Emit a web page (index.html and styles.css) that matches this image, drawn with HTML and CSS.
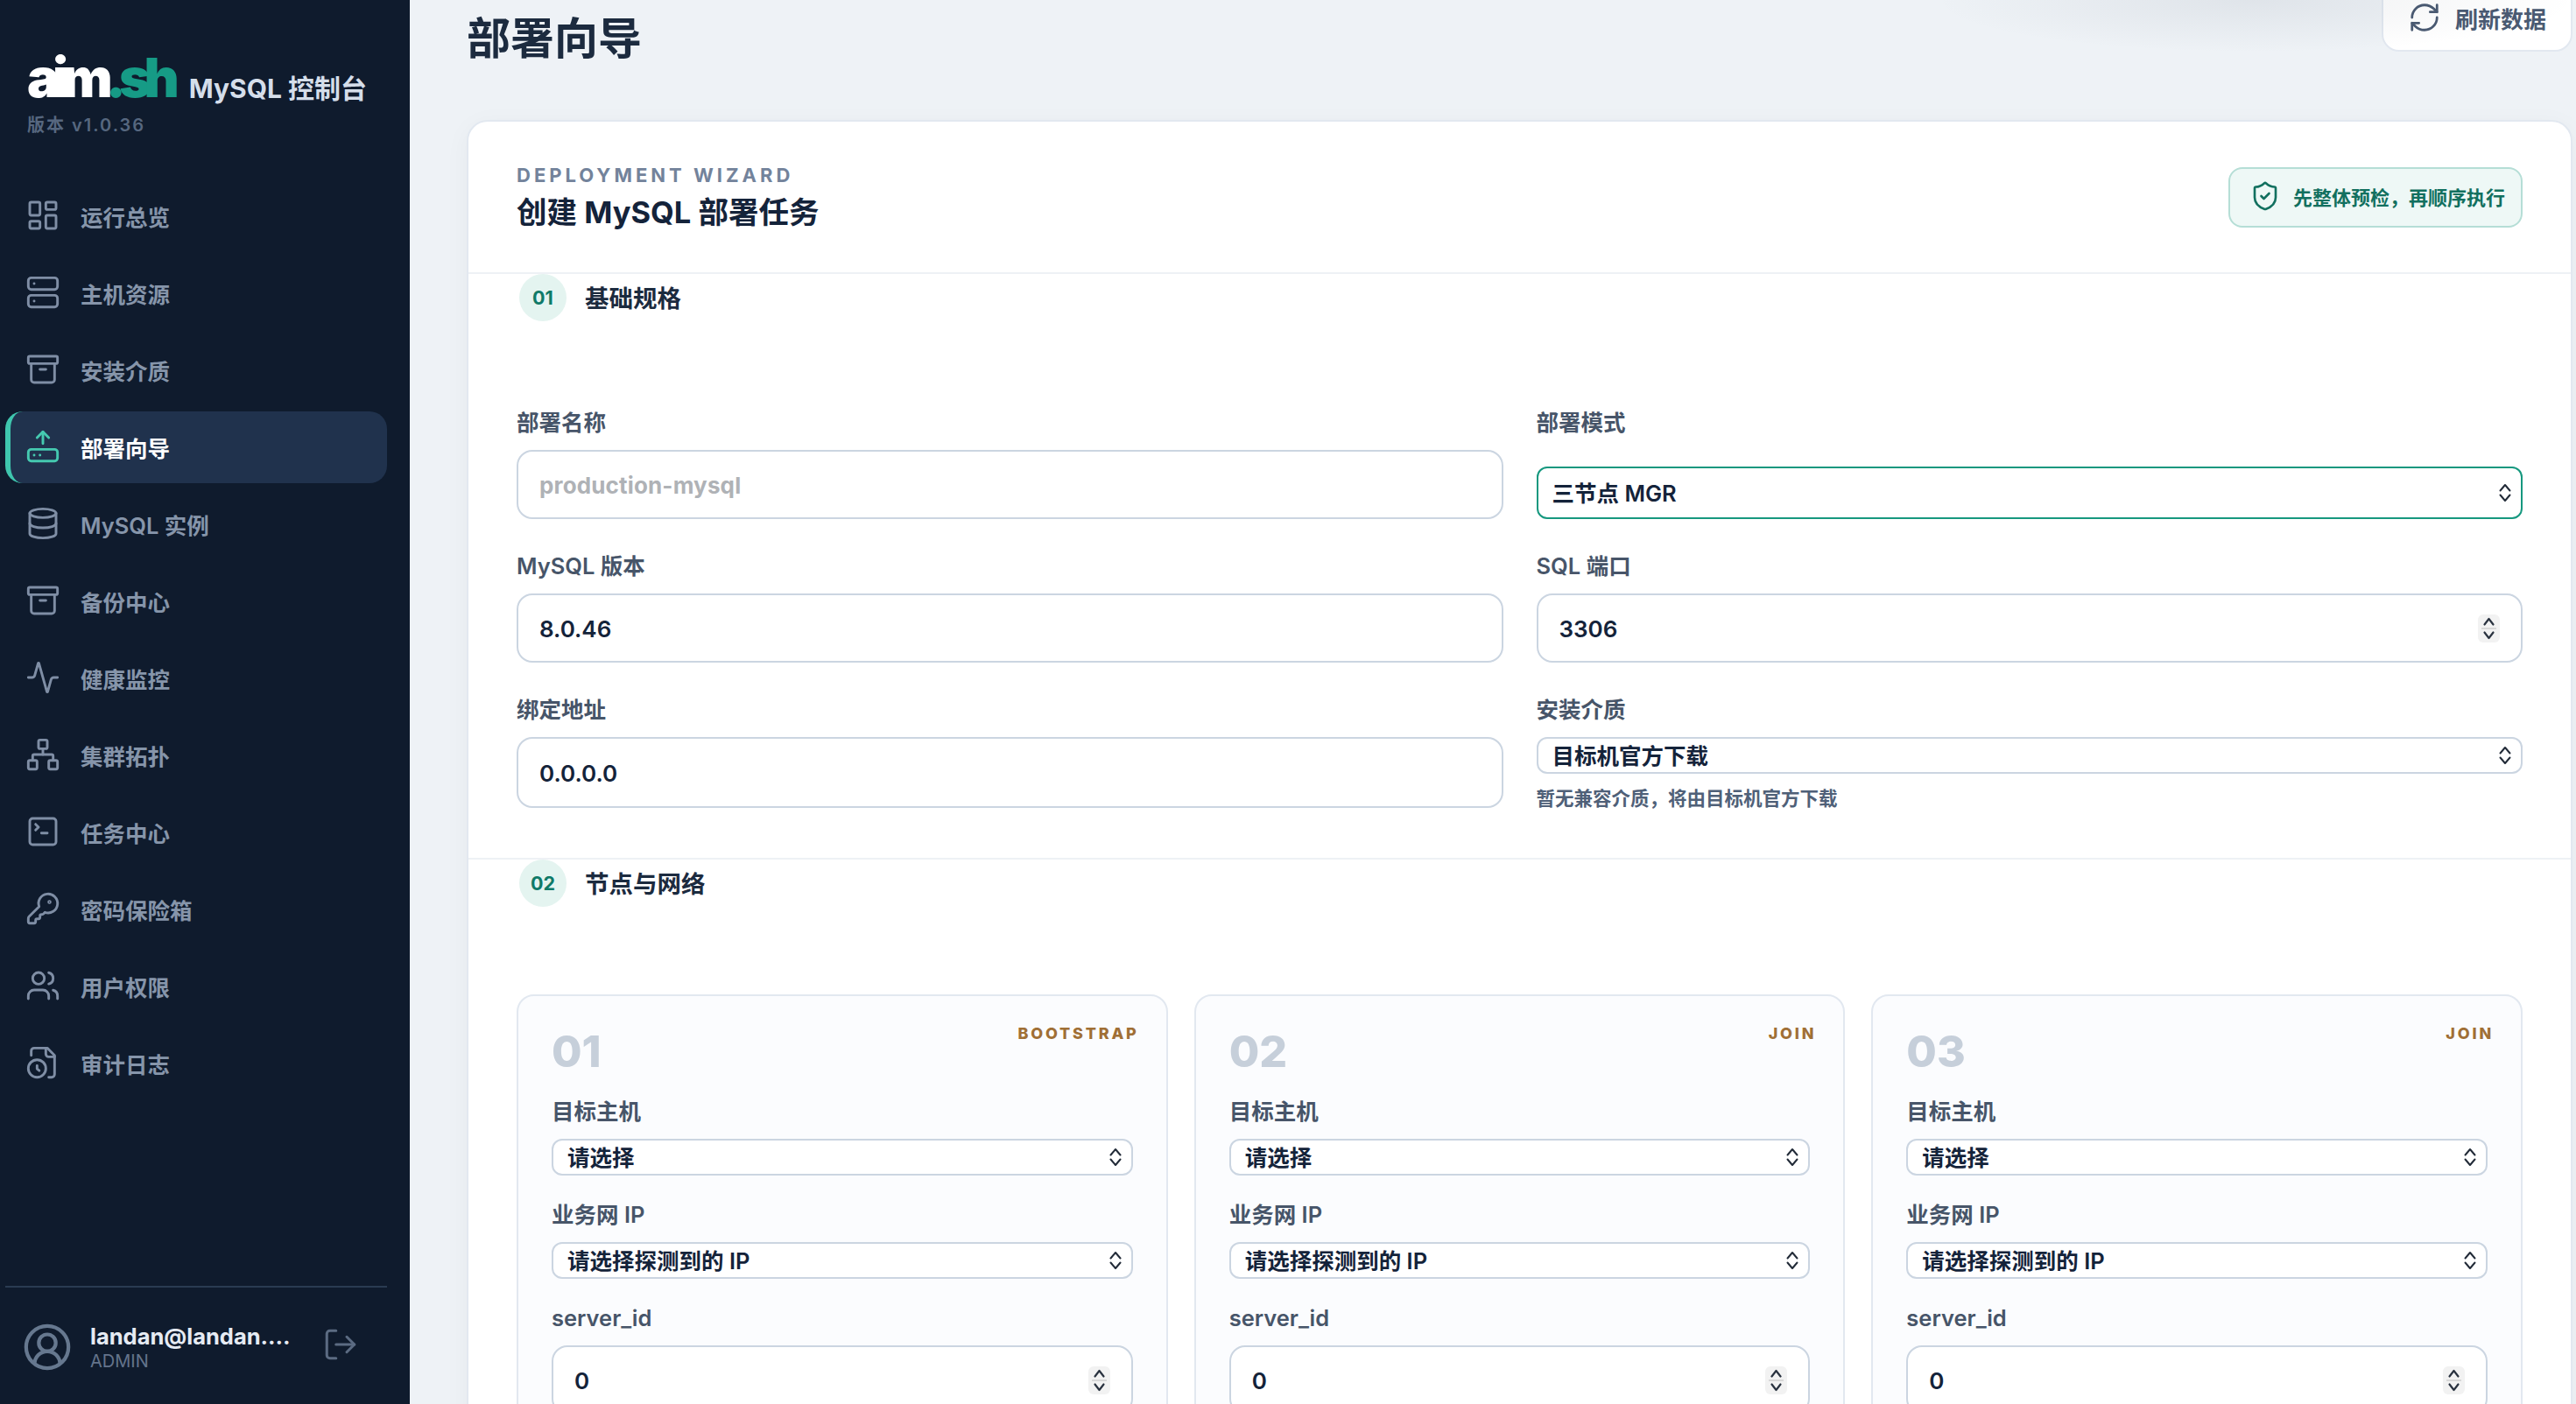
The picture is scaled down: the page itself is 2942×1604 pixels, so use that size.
FILE: index.html
```html
<!DOCTYPE html>
<html lang="zh-CN">
<head>
<meta charset="UTF-8">
<meta name="viewport" content="width=device-width, initial-scale=1.0">
<title>MySQL 控制台 - 部署向导</title>
<link rel="stylesheet" href="styles.css">
</head>

<body>
<svg class="defs" aria-hidden="true">
    <symbol id="spin" viewBox="0 0 25 32">
        <path d="M7.500 11.500 12.500 5l5 6.500M7.500 20.500l5 6.500 5-6.500" fill="none" stroke="#2a3340" stroke-width="2.200" stroke-linecap="round" stroke-linejoin="round"/>
        <path d="M4 16h17" stroke="#d8d8d8" stroke-width="2"/>
    </symbol>
</svg>

<div class="app">
    <aside class="sidebar">
        <div class="brand">
            <div class="brand-line">
                <span class="logo">aim<span class="logo-accent">.sh</span></span>
                <span class="brand-name">MySQL 控制台</span>
            </div>
            <div class="version">版本 v1.0.36</div>
        </div>

        <nav class="nav">
            <a class="nav-item">
                <svg class="icon" viewBox="0 0 24 24"><rect x="3" y="3" width="7" height="9" rx="1"/><rect x="14" y="3" width="7" height="5" rx="1"/><rect x="14" y="12" width="7" height="9" rx="1"/><rect x="3" y="16" width="7" height="5" rx="1"/></svg>
                <span>运行总览</span>
            </a>
            <a class="nav-item">
                <svg class="icon" viewBox="0 0 24 24"><rect x="2" y="2" width="20" height="8" rx="2"/><rect x="2" y="14" width="20" height="8" rx="2"/><path d="M6 6h.01M6 18h.01"/></svg>
                <span>主机资源</span>
            </a>
            <a class="nav-item">
                <svg class="icon" viewBox="0 0 24 24"><rect x="2" y="3" width="20" height="5" rx="1"/><path d="M4 8v11a2 2 0 0 0 2 2h12a2 2 0 0 0 2-2V8"/><path d="M10 12h4"/></svg>
                <span>安装介质</span>
            </a>
            <a class="nav-item active">
                <svg class="icon" viewBox="0 0 24 24"><path d="m16 6-4-4-4 4"/><path d="M12 2v8"/><rect x="2" y="14" width="20" height="8" rx="2"/><path d="M6 18h.01M10 18h.01"/></svg>
                <span>部署向导</span>
            </a>
            <a class="nav-item">
                <svg class="icon" viewBox="0 0 24 24"><ellipse cx="12" cy="5" rx="9" ry="3"/><path d="M3 5v14a9 3 0 0 0 18 0V5"/><path d="M3 12a9 3 0 0 0 18 0"/></svg>
                <span>MySQL 实例</span>
            </a>
            <a class="nav-item">
                <svg class="icon" viewBox="0 0 24 24"><rect x="2" y="3" width="20" height="5" rx="1"/><path d="M4 8v11a2 2 0 0 0 2 2h12a2 2 0 0 0 2-2V8"/><path d="M10 12h4"/></svg>
                <span>备份中心</span>
            </a>
            <a class="nav-item">
                <svg class="icon" viewBox="0 0 24 24"><path d="M22 12h-2.480a2 2 0 0 0-1.930 1.460l-2.350 8.360a.25.25 0 0 1-.48 0L9.240 2.180a.25.25 0 0 0-.48 0l-2.350 8.360A2 2 0 0 1 4.490 12H2"/></svg>
                <span>健康监控</span>
            </a>
            <a class="nav-item">
                <svg class="icon" viewBox="0 0 24 24"><rect x="16" y="16" width="6" height="6" rx="1"/><rect x="2" y="16" width="6" height="6" rx="1"/><rect x="9" y="2" width="6" height="6" rx="1"/><path d="M5 16v-3a1 1 0 0 1 1-1h12a1 1 0 0 1 1 1v3"/><path d="M12 12V8"/></svg>
                <span>集群拓扑</span>
            </a>
            <a class="nav-item">
                <svg class="icon" viewBox="0 0 24 24"><path d="m7 11 2-2-2-2"/><path d="M11 13h4"/><rect x="3" y="3" width="18" height="18" rx="2"/></svg>
                <span>任务中心</span>
            </a>
            <a class="nav-item">
                <svg class="icon" viewBox="0 0 24 24"><path d="M2.586 17.414A2 2 0 0 0 2 18.828V21a1 1 0 0 0 1 1h3a1 1 0 0 0 1-1v-1a1 1 0 0 1 1-1h1a1 1 0 0 0 1-1v-1a1 1 0 0 1 1-1h.172a2 2 0 0 0 1.414-.586l.814-.814a6.500 6.500 0 1 0-4-4z"/><circle cx="16.500" cy="7.500" r=".5"/></svg>
                <span>密码保险箱</span>
            </a>
            <a class="nav-item">
                <svg class="icon" viewBox="0 0 24 24"><path d="M16 21v-2a4 4 0 0 0-4-4H6a4 4 0 0 0-4 4v2"/><path d="M16 3.128a4 4 0 0 1 0 7.744"/><path d="M22 21v-2a4 4 0 0 0-3-3.870"/><circle cx="9" cy="7" r="4"/></svg>
                <span>用户权限</span>
            </a>
            <a class="nav-item">
                <svg class="icon" viewBox="0 0 24 24"><path d="M16 22h2a2 2 0 0 0 2-2V7l-5-5H6a2 2 0 0 0-2 2v3"/><path d="M14 2v4a2 2 0 0 0 2 2h4"/><circle cx="8" cy="16" r="6"/><path d="M9.500 17.500 8 16.250V14"/></svg>
                <span>审计日志</span>
            </a>
        </nav>

        <div class="user">
            <svg class="avatar" viewBox="0 0 24 24"><path d="M18 20a6 6 0 0 0-12 0"/><circle cx="12" cy="10" r="4"/><circle cx="12" cy="12" r="10"/></svg>
            <div class="user-info">
                <div class="user-name">landan@landan.…</div>
                <div class="user-role">ADMIN</div>
            </div>
            <svg class="logout" viewBox="0 0 24 24"><path d="M9 21H5a2 2 0 0 1-2-2V5a2 2 0 0 1 2-2h4"/><path d="m16 17 5-5-5-5"/><path d="M21 12H9"/></svg>
        </div>
    </aside>

    <main class="main">
        <div class="page-head">
            <h1>部署向导</h1>
            <button class="refresh">
                <svg class="refresh-icon" viewBox="0 0 24 24"><path d="M3 12a9 9 0 0 1 9-9 9.750 9.750 0 0 1 6.740 2.740L21 8"/><path d="M21 3v5h-5"/><path d="M21 12a9 9 0 0 1-9 9 9.750 9.750 0 0 1-6.740-2.740L3 16"/><path d="M8 16H3v5"/></svg>
                刷新数据
            </button>
        </div>

        <section class="card">
            <header class="card-head">
                <div>
                    <div class="eyebrow">DEPLOYMENT WIZARD</div>
                    <h2>创建 MySQL 部署任务</h2>
                </div>
                <div class="notice">
                    <svg class="notice-icon" viewBox="0 0 24 24"><path d="M20 13c0 5-3.500 7.500-7.660 8.950a1 1 0 0 1-.67-.01C7.500 20.500 4 18 4 13V6a1 1 0 0 1 1-1c2 0 4.500-1.200 6.240-2.720a1.170 1.170 0 0 1 1.520 0C14.510 3.810 17 5 19 5a1 1 0 0 1 1 1z"/><path d="m9 12 2 2 4-4"/></svg>
                    先整体预检，再顺序执行
                </div>
            </header>

            <div class="section">
                <div class="section-title">
                    <span class="step">01</span>
                    <h3>基础规格</h3>
                </div>
                <div class="form-grid">
                    <div class="field">
                        <label>部署名称</label>
                        <input class="text-input" type="text" placeholder="production-mysql">
                    </div>
                    <div class="field">
                        <label>部署模式</label>
                        <select class="select focused field-end">
                            <option>三节点 MGR</option>
                        </select>
                    </div>
                    <div class="field">
                        <label>MySQL 版本</label>
                        <input class="text-input" type="text" value="8.0.46">
                    </div>
                    <div class="field">
                        <label>SQL 端口</label>
                        <div class="number">
                            <input class="text-input" type="text" value="3306">
                            <svg class="spinner"><use href="#spin"/></svg>
                        </div>
                    </div>
                    <div class="field">
                        <label>绑定地址</label>
                        <input class="text-input grow" type="text" value="0.0.0.0">
                    </div>
                    <div class="field">
                        <label>安装介质</label>
                        <select class="select">
                            <option>目标机官方下载</option>
                        </select>
                        <p class="help">暂无兼容介质，将由目标机官方下载</p>
                    </div>
                </div>
            </div>

            <div class="section">
                <div class="section-title">
                    <span class="step">02</span>
                    <h3>节点与网络</h3>
                </div>
                <div class="node-grid">
                    <div class="node">
                        <div class="node-head">
                            <span class="node-no">01</span>
                            <span class="node-role">BOOTSTRAP</span>
                        </div>
                        <div class="node-field">
                            <label>目标主机</label>
                            <select class="select"><option>请选择</option></select>
                        </div>
                        <div class="node-field">
                            <label>业务网 IP</label>
                            <select class="select"><option>请选择探测到的 IP</option></select>
                        </div>
                        <div class="node-field">
                            <label>server_id</label>
                            <div class="number">
                                <input class="text-input" type="text" value="0">
                                <svg class="spinner"><use href="#spin"/></svg>
                            </div>
                        </div>
                    </div>
                    <div class="node">
                        <div class="node-head">
                            <span class="node-no">02</span>
                            <span class="node-role">JOIN</span>
                        </div>
                        <div class="node-field">
                            <label>目标主机</label>
                            <select class="select"><option>请选择</option></select>
                        </div>
                        <div class="node-field">
                            <label>业务网 IP</label>
                            <select class="select"><option>请选择探测到的 IP</option></select>
                        </div>
                        <div class="node-field">
                            <label>server_id</label>
                            <div class="number">
                                <input class="text-input" type="text" value="0">
                                <svg class="spinner"><use href="#spin"/></svg>
                            </div>
                        </div>
                    </div>
                    <div class="node">
                        <div class="node-head">
                            <span class="node-no">03</span>
                            <span class="node-role">JOIN</span>
                        </div>
                        <div class="node-field">
                            <label>目标主机</label>
                            <select class="select"><option>请选择</option></select>
                        </div>
                        <div class="node-field">
                            <label>业务网 IP</label>
                            <select class="select"><option>请选择探测到的 IP</option></select>
                        </div>
                        <div class="node-field">
                            <label>server_id</label>
                            <div class="number">
                                <input class="text-input" type="text" value="0">
                                <svg class="spinner"><use href="#spin"/></svg>
                            </div>
                        </div>
                    </div>
                </div>
            </div>
        </section>
    </main>
</div>
</body>
</html>
```

FILE: styles.css
```css
* {
    box-sizing: border-box;
}
html, body {
    height: 100%;
    margin: 0;
    overflow: hidden;
}
body {
    font-family: Inter, "Noto Sans CJK SC", sans-serif;
    background-color: #eef2f6;
    color: #14233a;
}
.defs {
    display: none;
}
.app {
    display: flex;
    height: 100vh;
}

/* sidebar */
.sidebar {
    width: 468px;
    flex-shrink: 0;
    display: flex;
    flex-direction: column;
    padding: 0 26px 0 6px;
    background-color: #0f1b2d;
}
.brand {
    height: 206px;
    padding: 58px 0 0 25px;
}
.brand-line {
    display: flex;
    align-items: flex-end;
    gap: 19px;
}
.logo {
    font-size: 62px;
    line-height: 62px;
    font-weight: 900;
    letter-spacing: -8px;
    color: #fff;
}
.logo-accent {
    color: #169b86;
}
.brand-name {
    margin-bottom: -1px;
    font-size: 30px;
    line-height: 40px;
    font-weight: 700;
    color: #d5deea;
    white-space: nowrap;
}
.version {
    margin-top: 11px;
    font-size: 20px;
    line-height: 24px;
    font-weight: 600;
    letter-spacing: 2px;
    color: #56677f;
}
.nav {
    display: flex;
    flex-direction: column;
    gap: 6px;
}
.nav-item {
    height: 82px;
    display: flex;
    align-items: center;
    gap: 23px;
    padding: 0 0 2px 23px;
    border-radius: 20px;
    font-size: 25.500px;
    font-weight: 600;
    color: #8695aa;
}
.nav-item.active {
    padding-left: 17px;
    border-left: 6px solid #3fc6ae;
    background-color: #20324d;
    color: #fff;
}
.icon {
    width: 40px;
    height: 40px;
    flex-shrink: 0;
    fill: none;
    stroke: #7f8ea5;
    stroke-width: 1.750;
    stroke-linecap: round;
    stroke-linejoin: round;
}
.active .icon {
    stroke: #45c9b0;
}
.user {
    margin-top: auto;
    height: 135px;
    display: flex;
    align-items: center;
    padding: 2px 0 0 19px;
    border-top: 2px solid #2a3b52;
}
.avatar {
    width: 58px;
    height: 58px;
    flex-shrink: 0;
    fill: none;
    stroke: #66788f;
    stroke-width: 1.750;
}
.user-info {
    margin-left: 20px;
    width: 265px;
}
.user-name {
    font-size: 25.500px;
    line-height: 32px;
    font-weight: 700;
    color: #e6ebf3;
    white-space: nowrap;
}
.user-role {
    font-size: 20px;
    line-height: 24px;
    color: #64748b;
}
.logout {
    width: 42px;
    height: 42px;
    flex-shrink: 0;
    margin: -6px 0 0 0;
    fill: none;
    stroke: #5b6b82;
    stroke-width: 1.750;
    stroke-linecap: round;
    stroke-linejoin: round;
}

/* main column, scrolled down a little */
.main {
    flex: 1;
    min-width: 0;
    position: relative;
    overflow: hidden;
    margin-top: -19px;
    padding: 0 4px 0 65px;
}
.main::after {
    content: "";
    position: absolute;
    top: 19px;
    left: 1740px;
    right: 0;
    height: 60px;
    background: radial-gradient(ellipse 50% 100% at 50% 0, rgba(30, 45, 70, 0.07), rgba(30, 45, 70, 0));
    pointer-events: none;
}
.page-head {
    display: flex;
    justify-content: space-between;
    align-items: flex-start;
    height: 97px;
    margin-bottom: 59px;
}
.page-head h1 {
    margin: 33px 0 0;
    font-size: 50px;
    line-height: 60px;
    font-weight: 700;
    color: #1c2b3f;
}
.refresh {
    width: 218px;
    height: 78px;
    display: flex;
    align-items: center;
    justify-content: center;
    gap: 16px;
    border: 2px solid #e2e8f0;
    border-radius: 20px;
    background-color: #fff;
    font-family: inherit;
    font-size: 26px;
    font-weight: 700;
    color: #4a5a72;
}
.refresh-icon {
    width: 38px;
    height: 38px;
    fill: none;
    stroke: #4a5a72;
    stroke-width: 1.750;
    stroke-linecap: round;
    stroke-linejoin: round;
}
.card {
    border: 2px solid #e2e8f0;
    border-radius: 24px;
    background-color: #fff;
    box-shadow: 0 6px 30px rgba(15, 27, 45, 0.04);
}
.card-head {
    display: flex;
    justify-content: space-between;
    align-items: center;
    padding: 47px 55px 45px;
}
.eyebrow {
    font-size: 22px;
    line-height: 28px;
    font-weight: 700;
    letter-spacing: 4px;
    color: #73839b;
}
.card-head h2 {
    margin: 6px 0 0;
    font-size: 34.500px;
    line-height: 46px;
    font-weight: 700;
    color: #14233a;
}
.notice {
    width: 336px;
    height: 69px;
    margin-top: -2px;
    display: flex;
    align-items: center;
    gap: 14px;
    padding: 0 0 2px 22px;
    border: 2px solid #b5ded6;
    border-radius: 16px;
    background-color: #eef8f6;
    font-size: 22px;
    font-weight: 700;
    color: #12705f;
}
.notice-icon {
    width: 36px;
    height: 36px;
    flex-shrink: 0;
    fill: none;
    stroke: #12705f;
    stroke-width: 1.750;
    stroke-linecap: round;
    stroke-linejoin: round;
}
.section {
    padding: 0 55px 57px;
    border-top: 2px solid #eef1f5;
}
.section-title {
    display: flex;
    align-items: center;
    gap: 21px;
    padding-left: 3px;
    margin-bottom: 100px;
}
.step {
    width: 54px;
    height: 54px;
    display: flex;
    align-items: center;
    justify-content: center;
    border-radius: 50%;
    background-color: #e4f4f0;
    font-size: 21.500px;
    font-weight: 700;
    color: #0f7a68;
}
.section-title h3 {
    margin: 0;
    padding-bottom: 2px;
    font-size: 27.500px;
    font-weight: 700;
    color: #1c2b3f;
}
.form-grid {
    display: grid;
    grid-template-columns: 1fr 1fr;
    column-gap: 38px;
    row-gap: 38px;
}
.field {
    display: flex;
    flex-direction: column;
    min-width: 0;
}
label {
    margin-bottom: 15px;
    font-size: 25.500px;
    line-height: 32px;
    font-weight: 600;
    color: #475569;
}
.text-input {
    width: 100%;
    height: 79px;
    padding: 2px 24px 0;
    border: 2px solid #cbd5e1;
    border-radius: 18px;
    background-color: #fff;
    font-family: inherit;
    font-size: 26px;
    font-weight: 600;
    color: #14233a;
    outline: none;
}
.text-input.grow {
    flex: 1;
}
.text-input::placeholder {
    color: #afb2b6;
    font-weight: 700;
    letter-spacing: 0.15px;
}
.select {
    display: block;
    width: 100%;
    height: 42px;
    padding: 0 40px 0 16px;
    border: 2px solid #cbd5e1;
    border-radius: 12px;
    appearance: none;
    background-color: #fff;
    background-image: url("data:image/svg+xml,%3Csvg xmlns='http://www.w3.org/2000/svg' width='16' height='22' viewBox='0 0 16 22'%3E%3Cpath d='M2.500 8.500 8 2l5.500 6.500M2.500 13.500 8 20l5.500-6.500' fill='none' stroke='%23222b38' stroke-width='2' stroke-linecap='round' stroke-linejoin='round'/%3E%3C/svg%3E");
    background-repeat: no-repeat;
    background-position: right 10px center;
    font-family: inherit;
    font-size: 25.500px;
    font-weight: 600;
    color: #14233a;
    outline: none;
}
.select.focused {
    height: 60px;
    border-color: #16987f;
}
.field-end {
    margin-top: auto;
}
.help {
    margin: 17px 0 0;
    font-size: 21.500px;
    line-height: 22px;
    font-weight: 600;
    color: #4f6078;
}
.number {
    position: relative;
}
.spinner {
    position: absolute;
    top: 24px;
    right: 26px;
    width: 25px;
    height: 32px;
    border-radius: 6px;
    background-color: #f2f2f2;
}
.node-grid {
    display: grid;
    grid-template-columns: repeat(3, 1fr);
    gap: 30px;
}
.node {
    padding: 33px 38px 40px;
    border: 2px solid #e2e8f0;
    border-radius: 20px;
    background-color: #fbfcfe;
}
.node-head {
    display: flex;
    justify-content: space-between;
    align-items: flex-start;
    margin-bottom: 23px;
}
.node-no {
    font-size: 50px;
    line-height: 60px;
    font-weight: 800;
    color: #c6cfda;
}
.node-role {
    margin-right: -7px;
    font-size: 18px;
    line-height: 20px;
    font-weight: 800;
    letter-spacing: 2.800px;
    color: #a06f35;
}
.node-field {
    display: flex;
    flex-direction: column;
    margin-bottom: 29px;
}
```
